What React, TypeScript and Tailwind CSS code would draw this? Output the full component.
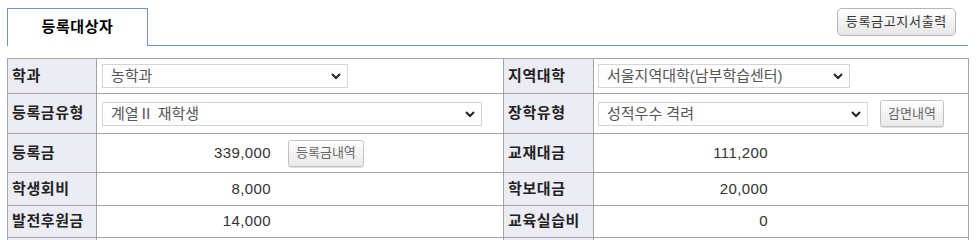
import React from 'react';

const font = { fontFamily: '"Liberation Sans", "Noto Sans CJK KR", sans-serif' };

function Chevron() {
  return (
    <svg width="10" height="7" viewBox="0 0 10 7" className="pointer-events-none absolute right-[7px] top-1/2 -translate-y-1/2">
      <path d="M1 1.5 L5 5.5 L9 1.5" fill="none" stroke="#222" strokeWidth="2" />
    </svg>
  );
}

function Select({ value, width }: { value: string; width: string }) {
  return (
    <div className={`relative h-[24px] ${width}`}>
      <select
        defaultValue={value}
        className="h-full w-full appearance-none border border-[#d4d4d4] bg-white pl-[8px] text-[15px] text-[#555] outline-none"
        style={font}
      >
        <option>{value}</option>
      </select>
      <Chevron />
    </div>
  );
}

function SmallButton({ children }: { children: React.ReactNode }) {
  return (
    <button className="h-[27px] rounded-[3px] border border-[#c2c2c2] bg-gradient-to-b from-white to-[#e9e9e9] px-[7px] text-[13px] text-[#666] shadow-[0_1px_0_#e0e0e0]">
      {children}
    </button>
  );
}

function Label({ children }: { children?: React.ReactNode }) {
  return (
    <td className="border border-[#a3a3a3] bg-[#ececf5] pl-[4px] text-[15px] font-bold tracking-[0.6px] text-[#222]">
      {children}
    </td>
  );
}

function Amount({ value, children }: { value?: string; children?: React.ReactNode }) {
  return (
    <td className="border border-[#a3a3a3] pl-[5px]">
      <div className="flex items-center">
        <span className="w-[169px] text-right text-[15px] tracking-[0.4px] text-[#333]">{value}</span>
        {children && <div className="ml-[17px]">{children}</div>}
      </div>
    </td>
  );
}

export default function App() {
  return (
    <div className="bg-white pl-[7px] pr-[9px] pt-[8px]" style={font}>
      <div className="flex items-start justify-between border-b border-[#6a96cc]">
        <div className="-mb-px flex h-[38px] w-[141px] items-center justify-center border border-b-0 border-[#6a96cc] bg-white text-[15px] font-bold text-black">
          <span className="-mt-[1px] tracking-[0.6px]">등록대상자</span>
        </div>
        <button className="mr-[12px] h-[28px] rounded-[5px] border border-[#b5b5b5] bg-gradient-to-b from-white to-[#e6e6e6] px-[8px] text-[13px] tracking-[0.7px] text-[#333]">
          등록금고지서출력
        </button>
      </div>

      <table className="mt-[12px] w-[961px] table-fixed border-collapse">
        <colgroup>
          <col className="w-[89px]" />
          <col className="w-[407px]" />
          <col className="w-[90px]" />
          <col className="w-[375px]" />
        </colgroup>
        <tbody>
          <tr className="h-[35px]">
            <Label>학과</Label>
            <td className="border border-[#a3a3a3] pl-[5px]">
              <Select value="농학과" width="w-[246px]" />
            </td>
            <Label>지역대학</Label>
            <td className="border border-[#a3a3a3] pl-[4px]">
              <Select value="서울지역대학(남부학습센터)" width="w-[252px]" />
            </td>
          </tr>
          <tr className="h-[40px]">
            <Label>등록금유형</Label>
            <td className="border border-[#a3a3a3] pl-[5px]">
              <Select value="계열Ⅱ 재학생" width="w-[380px]" />
            </td>
            <Label>장학유형</Label>
            <td className="border border-[#a3a3a3] pl-[4px]">
              <div className="flex items-center gap-[12px]">
                <Select value="성적우수 격려" width="w-[270px]" />
                <SmallButton>감면내역</SmallButton>
              </div>
            </td>
          </tr>
          <tr className="h-[39px]">
            <Label>등록금</Label>
            <Amount value="339,000">
              <SmallButton>등록금내역</SmallButton>
            </Amount>
            <Label>교재대금</Label>
            <Amount value="111,200" />
          </tr>
          <tr className="h-[33px]">
            <Label>학생회비</Label>
            <Amount value="8,000" />
            <Label>학보대금</Label>
            <Amount value="20,000" />
          </tr>
          <tr className="h-[32px]">
            <Label>발전후원금</Label>
            <Amount value="14,000" />
            <Label>교육실습비</Label>
            <Amount value="0" />
          </tr>
          <tr className="h-[33px]">
            <Label />
            <Amount />
            <Label />
            <td className="border border-[#a3a3a3]" />
          </tr>
        </tbody>
      </table>
    </div>
  );
}
